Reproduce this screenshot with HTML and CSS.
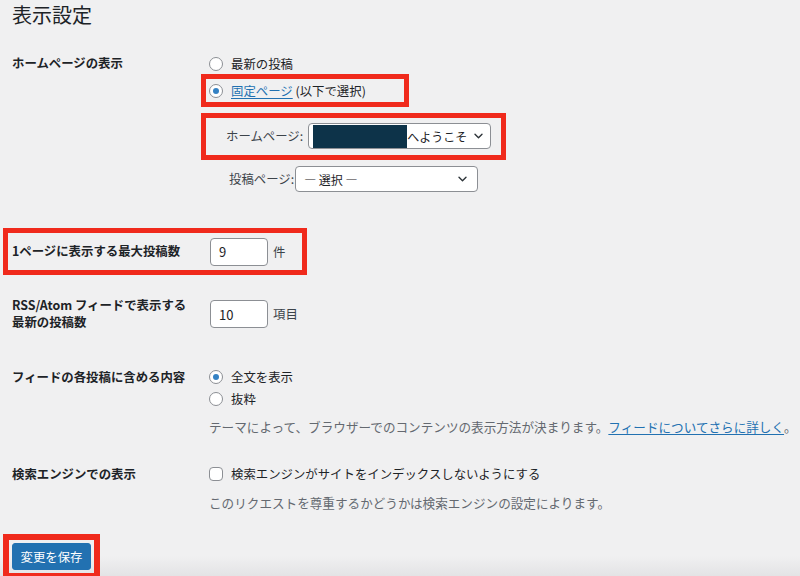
FILE: index.html
```html
<!DOCTYPE html>
<html lang="ja">
<head>
<meta charset="utf-8">
<title>表示設定</title>
<link rel="stylesheet" href="styles.css">
</head>
<body>
<div class="wrap">
  <h1 class="title">表示設定</h1>

  <div class="row row-home">
    <div class="label">ホームページの表示</div>
    <div class="field">
      <label class="opt"><input type="radio" name="front" class="radio"> 最新の投稿</label>
      <div class="mark mark-static">
        <label class="opt"><input type="radio" name="front" class="radio" checked> <a href="#" class="link">固定ページ</a>&nbsp;(以下で選択)</label>
      </div>
      <div class="mark mark-front">
        <span class="sub-label">ホームページ:</span>
        <div class="select select-front">
          <span class="redact"></span><span class="select-text">へようこそ</span>
          <svg class="chev" width="9" height="6" viewBox="0 0 9 6"><path d="M1 1.2l3.5 3.5 3.5-3.5" fill="none" stroke="#2c3338" stroke-width="1.4" stroke-linecap="round" stroke-linejoin="round"/></svg>
        </div>
      </div>
      <div class="subline">
        <span class="sub-label">投稿ページ:</span>
        <div class="select select-posts">
          <span class="select-text pad">— 選択 —</span>
          <svg class="chev" width="9" height="6" viewBox="0 0 9 6"><path d="M1 1.2l3.5 3.5 3.5-3.5" fill="none" stroke="#2c3338" stroke-width="1.4" stroke-linecap="round" stroke-linejoin="round"/></svg>
        </div>
      </div>
    </div>
  </div>

  <div class="row mark mark-row row-perpage">
    <div class="label">1ページに表示する最大投稿数</div>
    <div class="field inline">
      <span class="num">9</span><span class="unit">件</span>
    </div>
  </div>

  <div class="row row-rss">
    <div class="label lh">RSS/Atom フィードで表示する<br>最新の投稿数</div>
    <div class="field inline">
      <span class="num">10</span><span class="unit">項目</span>
    </div>
  </div>

  <div class="row row-feed">
    <div class="label line">フィードの各投稿に含める内容</div>
    <div class="field">
      <label class="opt line"><input type="radio" name="feed" class="radio" checked> 全文を表示</label>
      <label class="opt line"><input type="radio" name="feed" class="radio"> 抜粋</label>
      <p class="desc desc-feed">テーマによって、ブラウザーでのコンテンツの表示方法が決まります。<a href="#" class="link">フィードについてさらに詳しく</a>。</p>
    </div>
  </div>

  <div class="row row-search">
    <div class="label line">検索エンジンでの表示</div>
    <div class="field">
      <label class="opt line"><input type="checkbox" class="check"> 検索エンジンがサイトをインデックスしないようにする</label>
      <p class="desc desc-search">このリクエストを尊重するかどうかは検索エンジンの設定によります。</p>
    </div>
  </div>

  <div class="submit">
    <div class="mark mark-btn">
      <button class="button" type="button">変更を保存</button>
    </div>
  </div>
</div>
</body>
</html>
```

FILE: styles.css
```css
html, body {
  margin: 0;
  padding: 0;
}
body {
  width: 800px;
  height: 576px;
  overflow: hidden;
  background: linear-gradient(to bottom, #f0f0f1 0, #f0f0f1 556px, #e3e3e5 576px);
  font-family: "Noto Sans CJK JP", "Noto Sans", sans-serif;
  font-size: 12.4px;
  color: #1d2327;
}
.wrap {
  padding-left: 12px;
}
.title {
  margin: 0;
  font-size: 20px;
  font-weight: 400;
  line-height: 30px;
  color: #1d2327;
}
.row {
  display: grid;
  grid-template-columns: 197px auto;
}
.label {
  font-weight: 700;
  line-height: 23px;
}
.label.line {
  line-height: 22px;
}
.label.lh {
  line-height: 17px;
}
.row-home {
  margin-top: 22px;
}
.opt {
  display: flex;
  align-items: center;
  height: 23px;
  white-space: nowrap;
}
.opt.line {
  height: 22px;
}
.radio, .check {
  -webkit-appearance: none;
  appearance: none;
  margin: 0 8px 0 0;
  width: 14px;
  height: 14px;
  border: 1px solid #8c8f94;
  background: #fff;
  box-sizing: border-box;
  position: relative;
  flex: none;
}
.radio {
  border-radius: 50%;
}
.radio:checked::before {
  content: "";
  position: absolute;
  left: 3px;
  top: 3px;
  width: 6px;
  height: 6px;
  border-radius: 50%;
  background: #3582c4;
}
.check {
  border-radius: 4px;
}
.link {
  color: #2271b1;
  text-decoration: underline;
  text-underline-offset: 2px;
}
.mark {
  outline: 5px solid #f02a1c;
}
.mark-static {
  margin: 4px 0 0 -3px;
  padding-left: 3px;
  width: 198px;
  height: 23px;
  box-sizing: border-box;
}
.mark-front {
  margin: 16px 0 0 -3px;
  padding: 5px 0 6px 20px;
  width: 295px;
  height: 37px;
  box-sizing: border-box;
  display: flex;
  align-items: center;
}
.sub-label {
  color: #3c434a;
  white-space: nowrap;
}
.select {
  display: flex;
  align-items: center;
  height: 26px;
  box-sizing: border-box;
  border: 1px solid #8c8f94;
  border-radius: 4px;
  background: #fff;
}
.select-front {
  width: 183px;
  margin-left: 5px;
}
.select-posts {
  width: 183px;
  margin-left: 1px;
}
.redact {
  width: 94px;
  height: 23px;
  margin-left: 4px;
  background: #0d3349;
  flex: none;
}
.select-text {
  white-space: nowrap;
  font-size: 12px;
}
.select-text.pad {
  padding-left: 8px;
}
.chev {
  margin-left: auto;
  margin-right: 7px;
  flex: none;
}
.select-posts .chev {
  margin-right: 10px;
}
.subline {
  margin-top: 11px;
  padding-left: 20px;
  display: flex;
  align-items: center;
}
.mark-row {
  margin: 41px 0 0 -4px;
  padding-left: 4px;
  width: 294px;
  height: 37px;
  box-sizing: border-box;
  align-items: center;
}
.inline {
  display: flex;
  align-items: center;
}
.num {
  display: flex;
  align-items: center;
  width: 58px;
  height: 28px;
  margin-left: 1px;
  padding-left: 8px;
  box-sizing: border-box;
  background: #fff;
  border: 1px solid #8c8f94;
  border-radius: 4px;
  font-size: 13px;
}
.unit {
  margin-left: 5px;
  color: #3c434a;
}
.row-rss {
  margin-top: 27px;
  height: 34px;
  align-items: center;
}
.row-feed {
  margin-top: 35px;
}
.desc {
  margin: 0;
  color: #646970;
  line-height: 20px;
  white-space: nowrap;
  font-size: 12.6px;
}
.desc-feed {
  margin-top: 7px;
}
.row-search {
  margin-top: 26px;
}
.desc-search {
  margin-top: 8px;
}
.submit {
  margin-top: 27px;
}
.mark-btn {
  display: inline-block;
  margin-left: -3px;
  padding: 3px;
  outline-width: 6px;
}
.button {
  display: block;
  height: 27px;
  width: 79px;
  padding: 0;
  border: 1px solid #2271b1;
  border-radius: 3px;
  background: #2271b1;
  color: #fff;
  font-family: inherit;
  font-size: 12.4px;
}
```
